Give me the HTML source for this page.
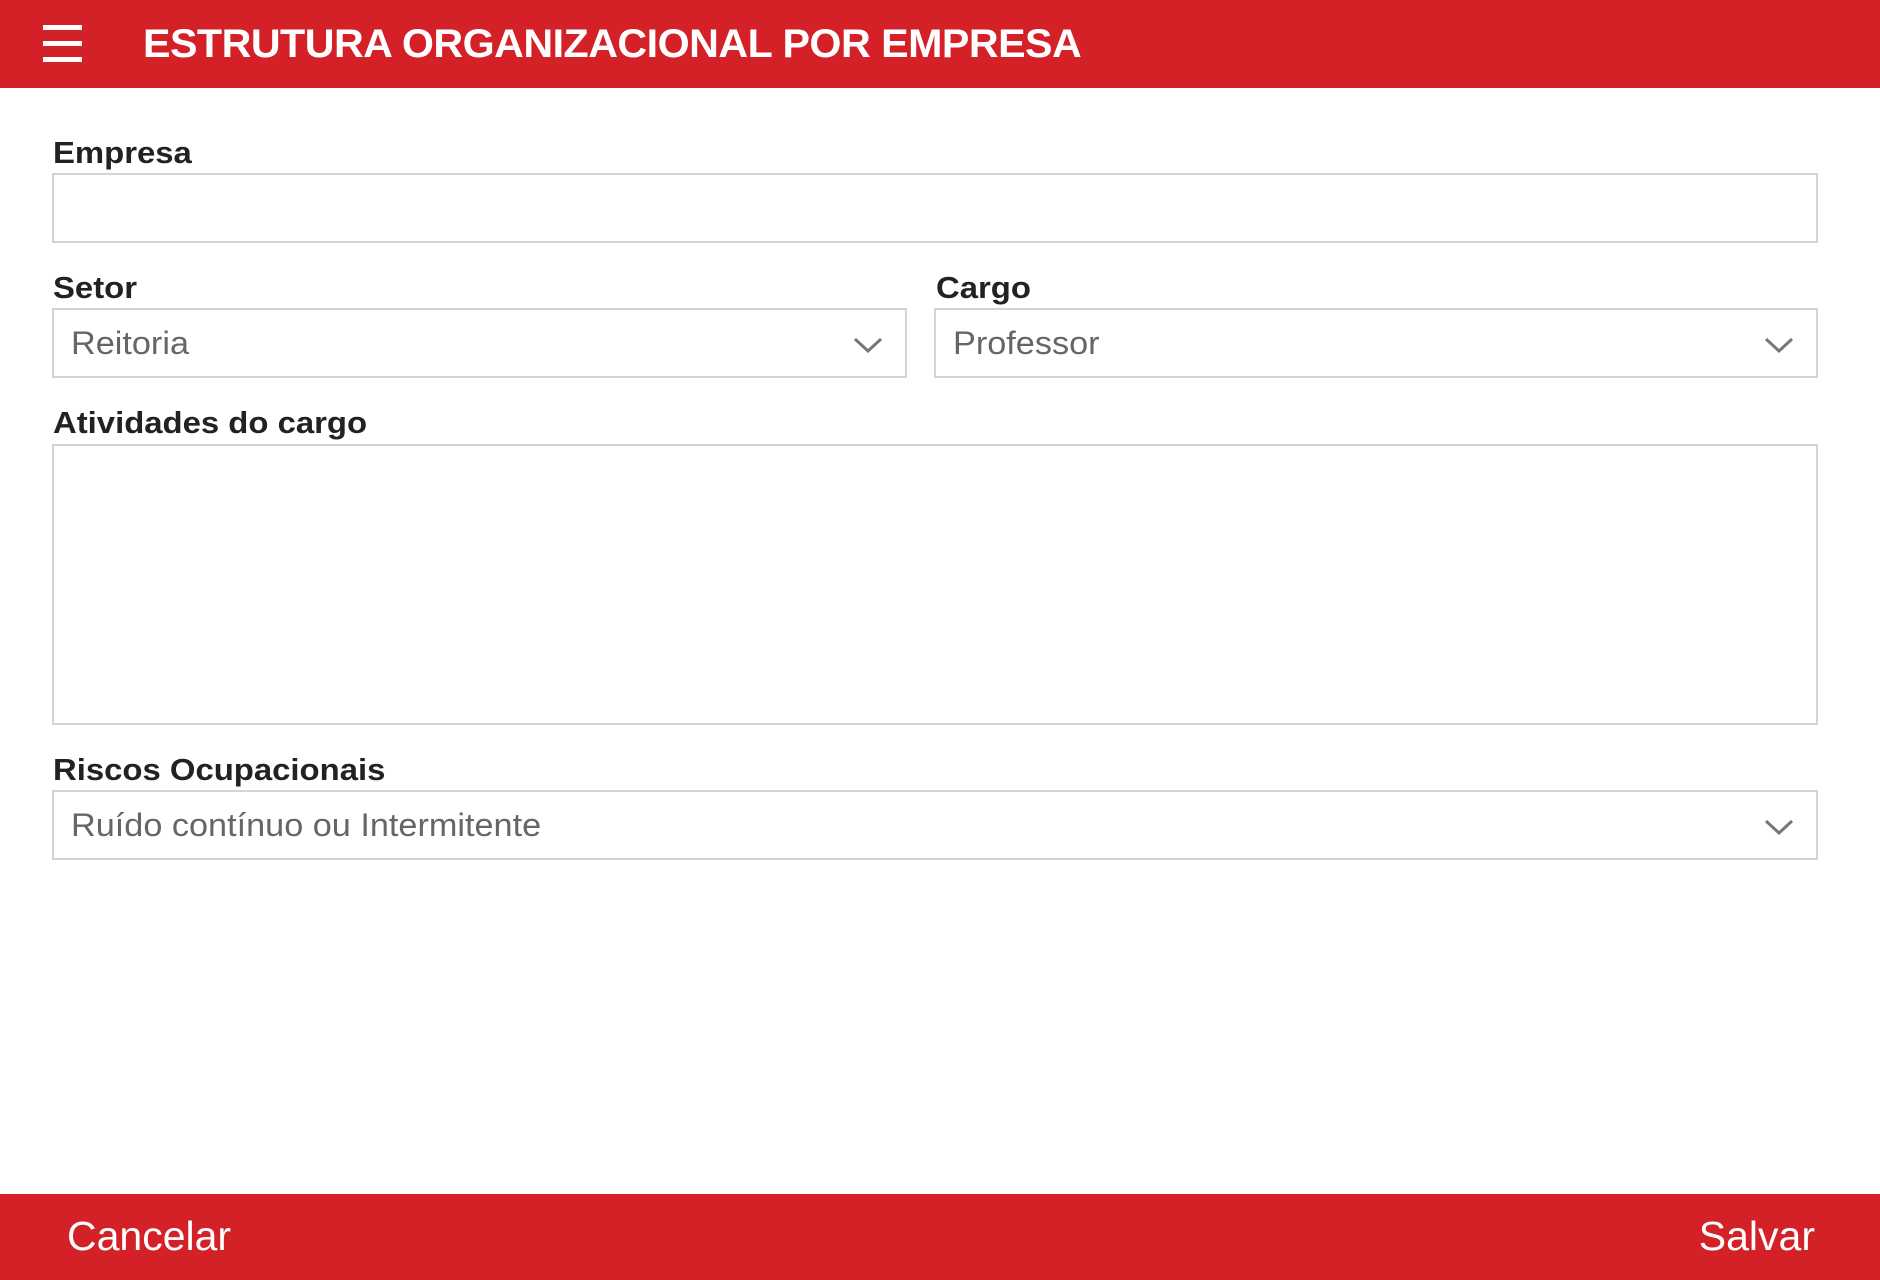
<!DOCTYPE html>
<html><head><meta charset="utf-8"><style>
*{margin:0;padding:0;box-sizing:border-box}
body{width:1880px;height:1280px;position:relative;background:#fff;font-family:"Liberation Sans",sans-serif;overflow:hidden}
.hdr{position:absolute;left:0;top:0;width:1880px;height:88px;background:#d32127}
.ham{position:absolute;left:43px;width:39px;height:5px;background:#fff}
.title{position:absolute;left:143px;top:19px;color:#fff;font-weight:bold;font-size:40px;line-height:50px;white-space:nowrap;transform-origin:left;transform:scaleX(1.03);letter-spacing:-0.5px}
.lbl{position:absolute;left:53px;font-weight:bold;font-size:31px;color:#222;line-height:34px;transform-origin:left;transform:scaleX(1.06)}
.box{position:absolute;border:2px solid #d4d4d4;background:#fff}
.val{position:absolute;left:17px;top:15px;font-size:32px;color:#666;line-height:36px;transform-origin:left;transform:scaleX(1.07);white-space:nowrap}
.chev{position:absolute;right:22px;top:27px}
.ftr{position:absolute;left:0;top:1194px;width:1880px;height:86px;background:#d32127;color:#fff;font-size:41px}
.ftr span{position:absolute;top:17px;line-height:50px}
</style></head><body>
<div class="hdr">
<div class="ham" style="top:25px"></div><div class="ham" style="top:41px"></div><div class="ham" style="top:57px"></div>
<div class="title">ESTRUTURA ORGANIZACIONAL POR EMPRESA</div>
</div>
<div class="lbl" style="top:136px">Empresa</div>
<div class="box" style="left:52px;top:173px;width:1766px;height:70px"></div>
<div class="lbl" style="top:271px">Setor</div>
<div class="lbl" style="top:271px;left:936px">Cargo</div>
<div class="box" style="left:52px;top:308px;width:855px;height:70px"><div class="val">Reitoria</div>
<svg class="chev" width="30" height="16" viewBox="0 0 30 16"><path d="M2 2 L15 14 L28 2" fill="none" stroke="#777" stroke-width="3"/></svg></div>
<div class="box" style="left:934px;top:308px;width:884px;height:70px"><div class="val">Professor</div>
<svg class="chev" width="30" height="16" viewBox="0 0 30 16"><path d="M2 2 L15 14 L28 2" fill="none" stroke="#777" stroke-width="3"/></svg></div>
<div class="lbl" style="top:406px">Atividades do cargo</div>
<div class="box" style="left:52px;top:444px;width:1766px;height:281px"></div>
<div class="lbl" style="top:753px">Riscos Ocupacionais</div>
<div class="box" style="left:52px;top:790px;width:1766px;height:70px"><div class="val">Ruído contínuo ou Intermitente</div>
<svg class="chev" width="30" height="16" viewBox="0 0 30 16"><path d="M2 2 L15 14 L28 2" fill="none" stroke="#777" stroke-width="3"/></svg></div>
<div class="ftr"><span style="left:67px">Cancelar</span><span style="right:65px">Salvar</span></div>
</body></html>
